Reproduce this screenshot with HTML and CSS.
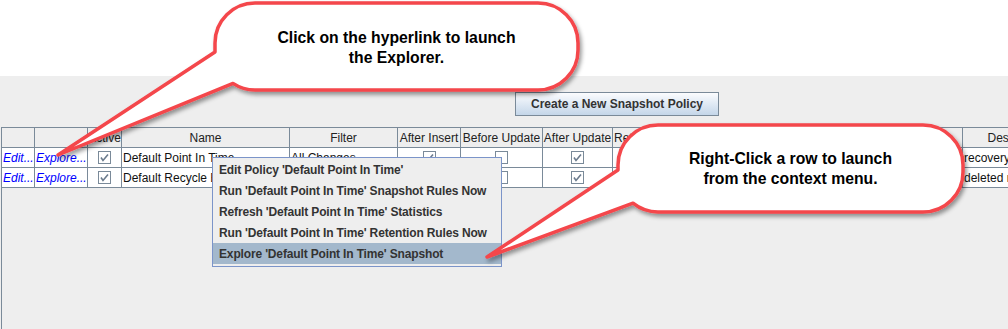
FILE: index.html
```html
<!DOCTYPE html>
<html lang="en">
<head>
    <meta charset="UTF-8">
    <title>Snapshot Policies</title>
    <link rel="stylesheet" href="styles.css">
</head>
<body>
    <div class="top-space"></div>

    <div class="panel">
        <div class="toolbar">
            <button class="btn">Create a New Snapshot Policy</button>
        </div>

        <div class="scroll">
            <!-- table header -->
            <div class="grid">
                <div class="th"></div>
                <div class="th"></div>
                <div class="th">Active</div>
                <div class="th">Name</div>
                <div class="th">Filter</div>
                <div class="th">After Insert</div>
                <div class="th">Before Update</div>
                <div class="th">After Update</div>
                <div class="th left">Retention Rules</div>
                <div class="th">Statistics</div>
                <div class="th">Description</div>
            </div>

            <!-- row 1 -->
            <div class="grid">
                <div class="td link">Edit...</div>
                <div class="td link">Explore...</div>
                <div class="td center"><span class="cb"><svg width="11" height="11" viewBox="0 0 11 11"><polyline points="2,5.5 4,8.5 9,2.5" fill="none" stroke="#6b7b8d" stroke-width="1.6"/></svg></span></div>
                <div class="td">Default Point In Time</div>
                <div class="td">All Changes</div>
                <div class="td center"><span class="cb"><svg width="11" height="11" viewBox="0 0 11 11"><polyline points="2,5.5 4,8.5 9,2.5" fill="none" stroke="#6b7b8d" stroke-width="1.6"/></svg></span></div>
                <div class="td center"><span class="cb"></span></div>
                <div class="td center"><span class="cb"><svg width="11" height="11" viewBox="0 0 11 11"><polyline points="2,5.5 4,8.5 9,2.5" fill="none" stroke="#6b7b8d" stroke-width="1.6"/></svg></span></div>
                <div class="td"></div>
                <div class="td"></div>
                <div class="td">recovery of data at a point in time</div>
            </div>

            <!-- row 2 -->
            <div class="grid">
                <div class="td link">Edit...</div>
                <div class="td link">Explore...</div>
                <div class="td center"><span class="cb"><svg width="11" height="11" viewBox="0 0 11 11"><polyline points="2,5.5 4,8.5 9,2.5" fill="none" stroke="#6b7b8d" stroke-width="1.6"/></svg></span></div>
                <div class="td">Default Recycle Bin</div>
                <div class="td"></div>
                <div class="td center"><span class="cb"><svg width="11" height="11" viewBox="0 0 11 11"><polyline points="2,5.5 4,8.5 9,2.5" fill="none" stroke="#6b7b8d" stroke-width="1.6"/></svg></span></div>
                <div class="td center"><span class="cb"></span></div>
                <div class="td center"><span class="cb"><svg width="11" height="11" viewBox="0 0 11 11"><polyline points="2,5.5 4,8.5 9,2.5" fill="none" stroke="#6b7b8d" stroke-width="1.6"/></svg></span></div>
                <div class="td"></div>
                <div class="td"></div>
                <div class="td">deleted records recovery</div>
            </div>
        </div>
    </div>

    <!-- context menu -->
    <div class="menu">
        <div class="item">Edit Policy 'Default Point In Time'</div>
        <div class="item">Run 'Default Point In Time' Snapshot Rules Now</div>
        <div class="item">Refresh 'Default Point In Time' Statistics</div>
        <div class="item">Run 'Default Point In Time' Retention Rules Now</div>
        <div class="item current">Explore 'Default Point In Time' Snapshot</div>
    </div>

    <!-- callouts -->
    <svg class="callouts" width="1008" height="329" viewBox="0 0 1008 329">
        <defs>
            <filter id="shadow" x="-10%" y="-10%" width="130%" height="140%">
                <feDropShadow dx="2" dy="3" stdDeviation="2" flood-color="#000" flood-opacity="0.4"/>
            </filter>
        </defs>
        <path d="M255,3 H538 A40,40 0 0 1 578,43 V50 A40,40 0 0 1 538,90 H255 A40,40 0 0 1 233,83.4 L58,155 L215,52 V43 A40,40 0 0 1 255,3 Z"
              fill="#fff" stroke="#f4464b" stroke-width="3.5" stroke-linejoin="round" filter="url(#shadow)"/>
        <path d="M658,125 H923 A40,40 0 0 1 963,165 V172 A40,40 0 0 1 923,212 H658 A40,40 0 0 1 633,203.2 L487,257 L618,170 V165 A40,40 0 0 1 658,125 Z"
              fill="#fff" stroke="#f4464b" stroke-width="3.5" stroke-linejoin="round" filter="url(#shadow)"/>
    </svg>
    <div class="bubble-text first">Click on the hyperlink to launch<br>the Explorer.</div>
    <div class="bubble-text second">Right-Click a row to launch<br>from the context menu.</div>
</body>
</html>
```

FILE: styles.css
```css
* {
    margin: 0;
    padding: 0;
    box-sizing: border-box;
}
body {
    width: 1008px;
    height: 329px;
    overflow: hidden;
    position: relative;
    background-color: #fff;
    font-family: "Liberation Sans", Arial, sans-serif;
    font-size: 12px;
    color: #111;
}
.top-space {
    height: 76px;
}
.panel {
    height: 253px;
    background-color: #eeeeee;
    display: flex;
    flex-direction: column;
}
.toolbar {
    height: 51px;
    padding: 16px 0 0 515px;
}
.btn {
    width: 204px;
    height: 24px;
    border: 1px solid #7a8a99;
    background: linear-gradient(#fbfcfe, #e2ebf5 45%, #c4d6e9);
    font-family: "Liberation Sans", Arial, sans-serif;
    font-size: 12px;
    font-weight: bold;
    color: #333;
}
.scroll {
    flex: 1;
    margin-left: 1px;
    border-left: 1px solid #7a8a99;
    border-top: 1px solid #7a8a99;
    overflow: hidden;
}
.grid {
    display: grid;
    grid-template-columns: 33px 53px 34px 168px 108px 63px 82px 70px 88px 262px 110px;
    width: max-content;
}
.th, .td {
    height: 20px;
    border-right: 1px solid #7a8a99;
    border-bottom: 1px solid #7a8a99;
    white-space: nowrap;
    overflow: hidden;
    display: flex;
    align-items: center;
}
.th {
    justify-content: center;
    background-color: #eeeeee;
    color: #222;
}
.th.left {
    justify-content: flex-start;
    padding-left: 1px;
}
.td {
    background-color: #fff;
    padding-left: 1px;
}
.td.center {
    justify-content: center;
    padding-left: 0;
}
.td.link {
    color: #0000ff;
    font-style: italic;
}
.cb {
    width: 13px;
    height: 13px;
    border: 1px solid #7a8a99;
    background-color: #fff;
    display: flex;
}
.menu {
    position: absolute;
    left: 212px;
    top: 157px;
    width: 290px;
    height: 110px;
    padding: 1px 0 2px;
    border: 1px solid #7b94c9;
    background-color: #eeeeee;
}
.menu .item {
    height: 21px;
    padding-left: 6px;
    display: flex;
    align-items: center;
    font-weight: bold;
    color: #333;
    letter-spacing: -0.15px;
    white-space: nowrap;
}
.menu .item.current {
    background-color: #a3b8cc;
}
.callouts {
    position: absolute;
    left: 0;
    top: 0;
    pointer-events: none;
}
.bubble-text {
    position: absolute;
    display: flex;
    align-items: center;
    justify-content: center;
    text-align: center;
    font-size: 15.75px;
    font-weight: bold;
    line-height: 20px;
    color: #000;
}
.bubble-text.first {
    left: 215px;
    top: 3px;
    width: 363px;
    height: 87px;
    padding-top: 2px;
}
.bubble-text.second {
    left: 618px;
    top: 125px;
    width: 345px;
    height: 87px;
}
```
